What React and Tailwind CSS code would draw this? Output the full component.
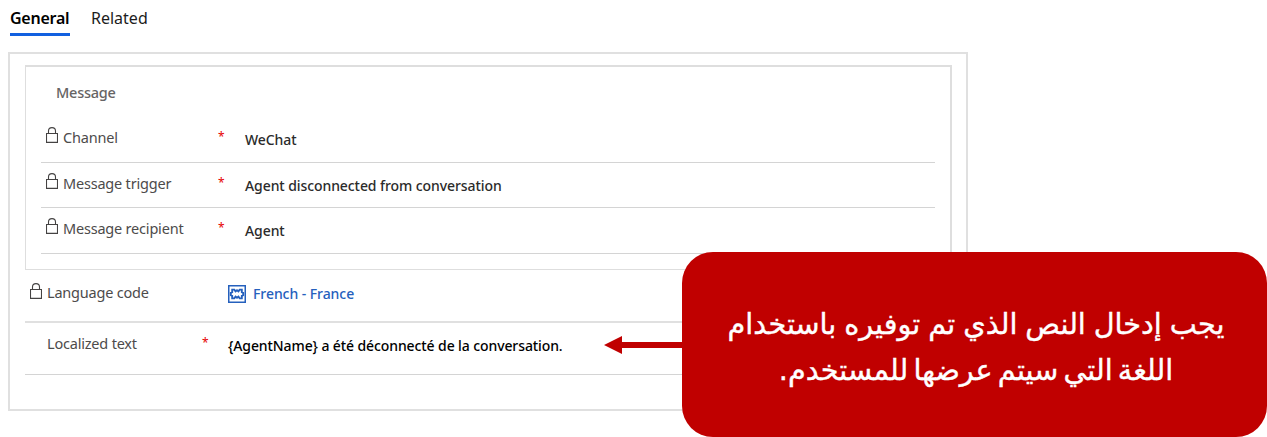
const LockIcon = () => (
  <svg className="h-4 w-3 shrink-0" viewBox="0 0 12 16" fill="none" stroke="#454343" strokeWidth="1.1">
    <path d="M0.5 6.5H11.5V15.4H0.5Z" />
    <path d="M2.5 6.5V4C2.5 1.9 3.9 0.6 6 0.6S9.5 1.9 9.5 4V6.5" />
  </svg>
);

const PuzzleIcon = () => (
  <svg className="h-[18px] w-[18px] shrink-0" viewBox="0 0 18 18" fill="none" stroke="#2560bd">
    <rect x="0.75" y="0.75" width="16.5" height="16.5" strokeWidth="1.5" />
    <path
      strokeWidth="1.9"
      d="M4.2 4.6H6.3L7.6 6.4L9 5.3L10.4 6.4L11.7 4.6H13.8V7.1L15.2 7.9V10.1L13.8 10.9V13.4H11.7L10.4 11.6L9 12.7L7.6 11.6L6.3 13.4H4.2V10.9L2.8 10.1V7.9L4.2 7.1Z"
    />
  </svg>
);

const Star = () => <span className="w-[26px] shrink-0 text-[12px] leading-5 text-[#e60000]">*</span>;

function Row({ label, value, height }) {
  return (
    <div className={`flex border-b border-[#d4d4d4] pl-[5px] ${height}`}>
      <LockIcon />
      <span className="ml-[5px] w-[155px] shrink-0 text-[14.5px] leading-5 tracking-[-0.2px] whitespace-nowrap text-[#4d4b4b]">
        {label}
      </span>
      <Star />
      <span className="pt-[3px] pl-px text-[14px] leading-5 font-medium tracking-[-0.08px] whitespace-nowrap text-[#2b2b2b]">
        {value}
      </span>
    </div>
  );
}

export default function App() {
  return (
    <div className="relative h-[437px] w-[1267px] overflow-hidden bg-white font-['Noto_Sans','Open_Sans',sans-serif]">
      <nav className="flex h-[52px] gap-[21px] pt-[6px] pl-[10px] text-[16px] leading-6 text-black">
        <span className="h-[30px] w-[60px] border-b-[3px] border-[#1160e0] font-semibold tracking-[-0.25px] whitespace-nowrap">General</span>
        <span className="whitespace-nowrap text-[#1c1c1c]">Related</span>
      </nav>

      <main className="ml-2 h-[359px] w-[960px] border-2 border-[#e0e0e0] px-[15px] pt-[11px]">
        <section className="h-[205px] w-[927px] border border-t-2 border-r-2 border-[#dedede] px-[15px] pt-[13px]">
          <h2 className="h-[47px] pl-[15px] text-[14.5px] leading-6 font-medium tracking-[-0.25px] text-[#666464]">Message</h2>
          <Row label="Channel" value="WeChat" height="h-[36px]" />
          <Row label="Message trigger" value="Agent disconnected from conversation" height="h-[45px] pt-[10px]" />
          <Row label="Message recipient" value="Agent" height="h-[46px] pt-[10px]" />
        </section>

        <div className="flex h-[53px] w-[927px] border-b-2 border-[#e0e0e0] pt-[13px] pl-[5px]">
          <LockIcon />
          <span className="-mt-px ml-[5px] w-[181px] shrink-0 text-[14.5px] leading-5 tracking-[-0.2px] whitespace-nowrap text-[#4d4b4b]">Language code</span>
          <div className="flex gap-[7px] pt-[2px]">
            <PuzzleIcon />
            <span className="-mt-px text-[14px] leading-5 font-medium tracking-[-0.06px] whitespace-nowrap text-[#2560bd]">French - France</span>
          </div>
        </div>

        <div className="flex h-[52px] w-[927px] border-b border-[#d4d4d4] pt-[10px] pl-[22px]">
          <span className="w-[155px] shrink-0 text-[14.5px] leading-5 tracking-[-0.2px] whitespace-nowrap text-[#4d4b4b]">Localized text</span>
          <Star />
          <span className="pt-[3px] text-[14px] leading-5 font-medium tracking-[-0.1px] whitespace-nowrap text-black">
            {'{AgentName} a été déconnecté de la conversation.'}
          </span>
        </div>
      </main>

      <aside className="absolute top-[252px] left-[604px] flex items-center">
        <svg className="h-[18px] w-[78px]" viewBox="0 0 78 18" fill="#c00000">
          <path d="M0 9L18 0V6H78V12H18V18Z" />
        </svg>
        <div
          dir="rtl"
          className="flex h-[185px] w-[585px] flex-col items-center justify-center rounded-[31px] bg-[#c00000] pt-[5px] pl-[3px] text-[28.7px] leading-[46px] text-white font-['DejaVu_Sans',sans-serif] [-webkit-text-stroke:0.4px_white]"
        >
          <p className="[word-spacing:-1.2px] whitespace-nowrap">يجب إدخال النص الذي تم توفيره باستخدام</p>
          <p className="[word-spacing:-4px] whitespace-nowrap">اللغة التي سيتم عرضها للمستخدم.</p>
        </div>
      </aside>
    </div>
  );
}
